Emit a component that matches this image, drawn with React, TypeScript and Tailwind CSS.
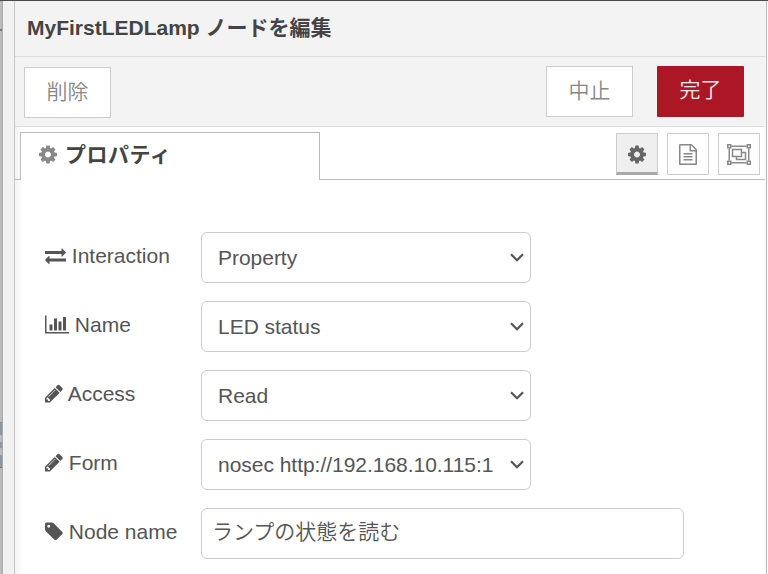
import React from "react";

type Glyph = { box: string; w: string; d: string };

const glyphs: Record<string, Glyph> = {
  cog: {
    box: "128 0 1536 1792",
    w: "w-[18px]",
    d: "M1152 896q0-106-75-181t-181-75-181 75-75 181 75 181 181 75 181-75 75-181zm512-109v222q0 12-8 23t-20 13l-185 28q-19 54-39 91 35 50 107 138 10 12 10 25t-9 23q-27 37-99 108t-94 71q-12 0-26-9l-138-108q-44 23-91 38-16 136-29 186-7 28-36 28h-222q-14 0-24.5-8.5t-11.5-21.5l-28-184q-49-16-90-37l-141 107q-10 9-25 9-14 0-25-11-126-114-165-168-7-10-7-23 0-12 8-23 15-21 51-66.5t54-70.5q-27-50-41-99l-183-27q-13-2-21-12.5t-8-23.5v-222q0-12 8-23t19-13l186-28q14-46 39-92-40-57-107-138-10-12-10-24 0-10 9-23 26-36 98.5-107.5t94.5-71.5q13 0 26 10l138 107q44-23 91-38 16-136 29-186 7-28 36-28h222q14 0 24.5 8.5t11.5 21.5l28 184q49 16 90 37l142-107q9-9 24-9 13 0 25 10 129 119 165 170 7 8 7 22 0 12-8 23-15 21-51 66.5t-54 70.5q26 50 41 98l183 28q13 2 21 12.5t8 23.5z",
  },
  exchange: {
    box: "0 0 1792 1792",
    w: "w-[21px]",
    d: "M1792 1184v192q0 13-9.5 22.5t-22.5 9.5h-1376v192q0 13-9.5 22.5t-22.5 9.5q-12 0-24-10l-319-320q-9-9-9-22 0-14 9-23l320-320q9-9 23-9 13 0 22.5 9.5t9.5 22.5v192h1376q13 0 22.5 9.5t9.5 22.5zm0-544q0 14-9 23l-320 320q-9 9-23 9-13 0-22.5-9.5t-9.5-22.5v-192h-1376q-13 0-22.5-9.5t-9.5-22.5v-192q0-13 9.5-22.5t22.5-9.5h1376v-192q0-14 9-23t23-9q12 0 24 10l319 319q9 9 9 23z",
  },
  chart: {
    box: "0 0 2048 1792",
    w: "w-[24px]",
    d: "M640 896v512h-256v-512h256zm384-512v1024h-256v-1024h256zm1024 1152v128h-2048v-1536h128v1408h1920zm-640-896v768h-256v-768h256zm384-384v1152h-256v-1152h256z",
  },
  pencil: {
    box: "128 0 1536 1792",
    w: "w-[18px]",
    d: "M491 1536l91-91-235-235-91 91v107h128v128h107zm523-928q0-22-22-22-10 0-17 7l-542 542q-7 7-7 17 0 22 22 22 10 0 17-7l542-542q7-7 7-17zm-54-192l416 416-832 832h-416v-416zm683 96q0 53-37 90l-166 166-416-416 166-165q36-38 90-38 53 0 91 38l235 234q37 39 37 91z",
  },
  tag: {
    box: "128 0 1536 1792",
    w: "w-[18px]",
    d: "M576 448q0-53-37.5-90.5t-90.5-37.5-90.5 37.5-37.5 90.5 37.5 90.5 90.5 37.5 90.5-37.5 37.5-90.5zm1067 576q0 53-37 90l-491 492q-39 37-91 37-53 0-90-37l-715-716q-38-37-64.500-101t-26.500-117v-416q0-52 38-90t90-38h416q53 0 117 26.500t102 64.500l715 714q37 39 37 91z",
  },
  file: {
    box: "128 0 1536 1792",
    w: "w-[18px]",
    d: "M1596 380q28 28 48 76t20 88v1152q0 40-28 68t-68 28h-1344q-40 0-68-28t-28-68v-1600q0-40 28-68t68-28h896q40 0 88 20t76 48zm-444-244v376h376q-10-29-22-41l-313-313q-12-12-41-22zm384 1528v-1024h-416q-40 0-68-28t-28-68v-416h-768v1536h1280zm-1024-864q0-14 9-23t23-9h704q14 0 23 9t9 23v64q0 14-9 23t-23 9h-704q-14 0-23-9t-9-23v-64zm736 224q14 0 23 9t9 23v64q0 14-9 23t-23 9h-704q-14 0-23-9t-9-23v-64q0-14 9-23t23-9h704zm0 256q14 0 23 9t9 23v64q0 14-9 23t-23 9h-704q-14 0-23-9t-9-23v-64q0-14 9-23t23-9h704z",
  },
};

function Icon({ name }: { name: string }) {
  const g = glyphs[name];
  return (
    <svg viewBox={g.box} className={`inline-block h-[21px] shrink-0 align-[-3px] ${g.w}`} fill="currentColor">
      <path d={g.d} />
    </svg>
  );
}

function ObjectGroup() {
  return (
    <svg viewBox="0 0 24 21" className="h-[21px] w-[24px]" fill="none" stroke="currentColor" strokeWidth="1.5">
      <path d="M4.500 2.250h15M4.500 18.750h15M2.250 4.500v12M21.750 4.500v12" />
      <path d="M.75.75h3v3h-3zM20.250.75h3v3h-3zM.75 17.250h3v3h-3zM20.250 17.250h3v3h-3z" />
      <path d="M5.500 5.500h9v7h-9zM14.500 8.500h4v7h-9v-3" />
    </svg>
  );
}

function Chevron() {
  return (
    <svg viewBox="0 0 14 9" className="mb-[2px] h-[9px] w-[14px] shrink-0" fill="none" stroke="#555" strokeWidth="2.2">
      <path d="M1 1.200l6 6 6-6" />
    </svg>
  );
}

const rows = [
  { icon: "exchange", label: "Interaction", value: "Property" },
  { icon: "chart", label: "Name", value: "LED status" },
  { icon: "pencil", label: "Access", value: "Read" },
  { icon: "pencil", label: "Form", value: "nosec http://192.168.10.115:1" },
];

function Label({ icon, text }: { icon: string; text: string }) {
  return (
    <div className="w-[156px] shrink-0 whitespace-nowrap pt-[9px]">
      <Icon name={icon} />
      {" " + text}
    </div>
  );
}

export default function App() {
  return (
    <div className="flex h-[574px] w-[768px] flex-col overflow-hidden border-t border-[#4d494d] bg-white font-['Liberation_Sans','Noto_Sans_CJK_JP',sans-serif] text-[21px] leading-[30px] text-[#555]">
      <div className="flex min-h-0 flex-1">
        {/* workspace edge with the nodes that show beside the tray */}
        <div className="flex w-[3px] shrink-0 flex-col border-r border-[#aaa] bg-[#bbb]">
          <div className="mt-[28px] h-[2px] bg-[#777]" />
          <div className="mt-[391px] h-[13px] border-t border-[#888] bg-[#8c96a0]" />
          <div className="mt-[7px] h-[6px] bg-[#8c96a0]" />
          <div className="mt-[7px] h-[13px] border-b border-[#777] bg-[#8c96a0]" />
        </div>
        <div className="w-[12px] shrink-0 border-r border-[#c4c4c4] bg-[#f2f2f2]" />
        <div className="flex w-[750px] shrink-0 flex-col bg-linear-to-r from-[#f3f3f3] to-white to-[8px]">
          <header className="flex h-[56px] items-center border-b border-[#ddd] bg-[#f3f3f3] pb-[2px] pl-[12px] font-bold text-[#444]">
            MyFirstLEDLamp ノードを編集
          </header>
          <div className="flex h-[70px] items-start border-b border-[#ddd] bg-[#f3f3f3] pl-[9px] pr-[21px] pt-[9px] font-[350] text-[#888]">
            <button className="mt-px h-[51px] w-[87px] border border-[#ccc] bg-white pb-px">削除</button>
            <button className="ml-auto h-[51px] w-[87px] border border-[#ccc] bg-white pb-px">中止</button>
            <button className="ml-[24px] h-[51px] w-[87px] rounded-[1px] bg-[#ad1625] pb-[3px] text-[#eee]">完了</button>
          </div>
          <div className="flex h-[53px] items-end">
            <div className="h-px w-[5px] bg-[#bbb]" />
            <div className="flex h-[48px] w-[300px] items-center gap-[8px] border border-b-0 border-[#bbb] bg-white pb-[4px] pl-[18px] text-[#888]">
              <Icon name="cog" />
              <span className="font-bold tracking-[0.5px] text-[#444]">プロパティ</span>
            </div>
            <div className="flex h-[53px] flex-1 justify-end gap-[9px] border-b border-[#bbb] pr-[5px] pt-[6px] text-[#888]">
              <div className="flex h-[42px] w-[42px] items-center justify-center border border-b-[3px] border-[#ccc] border-b-[#aaa] bg-[#efefef] pt-[2px] text-[#666]">
                <Icon name="cog" />
              </div>
              <div className="flex h-[42px] w-[42px] items-center justify-center border border-[#ccc]">
                <Icon name="file" />
              </div>
              <div className="flex h-[42px] w-[42px] items-center justify-center border border-[#ccc]">
                <ObjectGroup />
              </div>
            </div>
          </div>
          <div className="flex flex-col gap-[18px] pl-[30px] pt-[52px]">
            {rows.map((r) => (
              <div key={r.label} className="flex h-[51px]">
                <Label icon={r.icon} text={r.label} />
                <div className="flex h-[51px] w-[330px] items-center justify-between rounded-[6px] border border-[#ccc] bg-white pl-[16px] pr-[6px] pt-px">
                  <span className="whitespace-nowrap tracking-[-0.03px]">{r.value}</span>
                  <Chevron />
                </div>
              </div>
            ))}
            <div className="flex h-[51px]">
              <Label icon="tag" text="Node name" />
              <div className="flex h-[51px] w-[483px] items-center rounded-[6px] border border-[#ccc] bg-white pb-[3px] pl-[10px] font-[350]">
                ランプの状態を読む
              </div>
            </div>
          </div>
        </div>
        <div className="w-[2px] shrink-0 border-r border-[#bbb] bg-[#f6f6f6]" />
      </div>
    </div>
  );
}
